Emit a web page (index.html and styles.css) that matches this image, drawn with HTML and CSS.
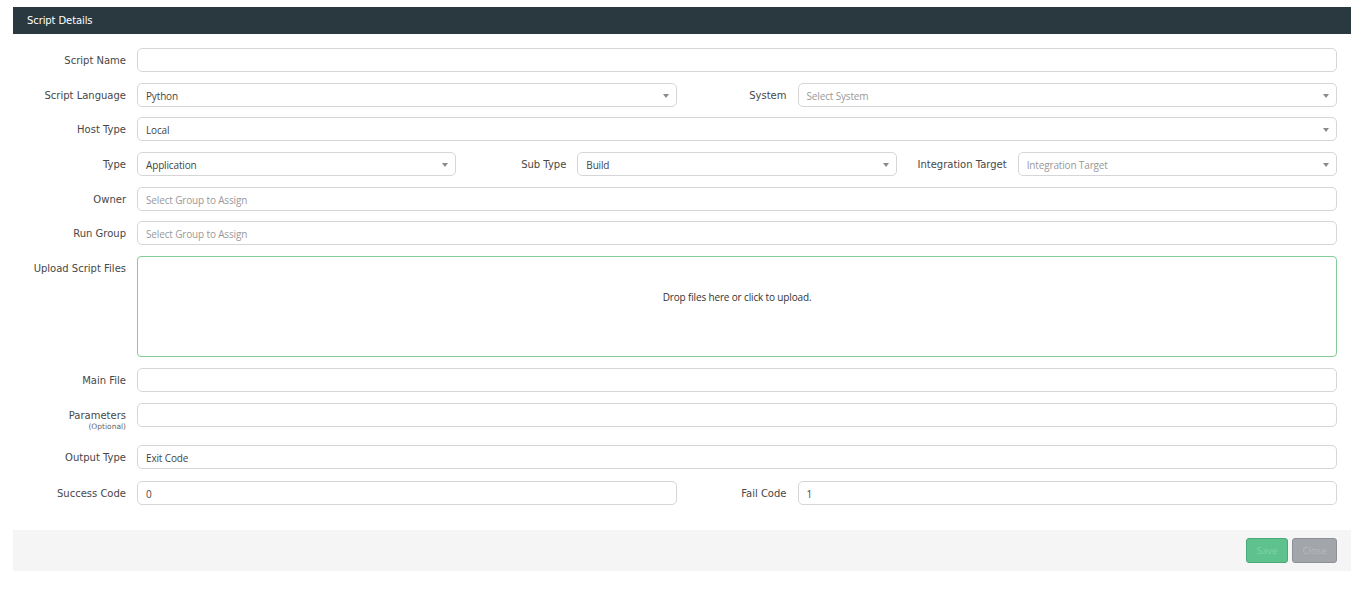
FILE: index.html
```html
<!DOCTYPE html>
<html>
<head>
<meta charset="utf-8">
<link rel="stylesheet" href="styles.css">
</head>
<body>
<div class="panel">
  <div class="panel-head">Script Details</div>
  <div class="form">
    <div class="row">
      <label class="lbl first">Script Name</label>
      <div class="field"></div>
    </div>
    <div class="row">
      <label class="lbl first">Script Language</label>
      <div class="field select">Python</div>
      <label class="lbl">System</label>
      <div class="field select ph">Select System</div>
    </div>
    <div class="row">
      <label class="lbl first">Host Type</label>
      <div class="field select">Local</div>
    </div>
    <div class="row">
      <label class="lbl first">Type</label>
      <div class="field select">Application</div>
      <label class="lbl">Sub Type</label>
      <div class="field select">Build</div>
      <label class="lbl">Integration Target</label>
      <div class="field select ph">Integration Target</div>
    </div>
    <div class="row">
      <label class="lbl first">Owner</label>
      <div class="field ph">Select Group to Assign</div>
    </div>
    <div class="row">
      <label class="lbl first">Run Group</label>
      <div class="field ph">Select Group to Assign</div>
    </div>
    <div class="row">
      <label class="lbl first">Upload Script Files</label>
      <div class="field drop">Drop files here or click to upload.</div>
    </div>
    <div class="row">
      <label class="lbl first">Main File</label>
      <div class="field"></div>
    </div>
    <div class="row params">
      <label class="lbl first two">Parameters<span class="opt">(Optional)</span></label>
      <div class="field"></div>
    </div>
    <div class="row output">
      <label class="lbl first">Output Type</label>
      <div class="field">Exit Code</div>
    </div>
    <div class="row last">
      <label class="lbl first">Success Code</label>
      <div class="field">0</div>
      <label class="lbl">Fail Code</label>
      <div class="field">1</div>
    </div>
  </div>
  <div class="footer">
    <button class="btn save">Save</button>
    <button class="btn close">Close</button>
  </div>
</div>
</body>
</html>
```
FILE: styles.css
```css
html, body {
  margin: 0;
  padding: 0;
  background: #ffffff;
}
body {
  padding: 7px 13px 0 13px;
  font-family: "DejaVu Sans", "Noto Sans", sans-serif;
}
.panel {
  width: 1338px;
}
.panel-head {
  height: 27px;
  background: #2a3840;
  color: #ffffff;
  font-size: 10px;
  line-height: 27px;
  padding-left: 14px;
  letter-spacing: -0.1px;
}
.form {
  padding: 14px 14px 0 0;
}
.row {
  display: flex;
  align-items: flex-start;
  margin-bottom: 10.7px;
}
.row.params {
  margin-bottom: 18.4px;
}
.row.output {
  margin-bottom: 12px;
}
.row.last {
  margin-bottom: 0;
}
.lbl {
  flex: 0 0 110px;
  margin-right: 11px;
  text-align: right;
  font-size: 10px;
  font-weight: 400;
  color: #474747;
  line-height: 24px;
  height: 24px;
  padding-top: 1px;
  box-sizing: border-box;
  white-space: nowrap;
}
.lbl.first {
  flex: 0 0 113px;
}
.lbl.two {
  line-height: 11px;
  padding-top: 7px;
  height: 24px;
  overflow: visible;
}
.opt {
  display: block;
  font-size: 7.5px;
  color: #666;
  line-height: 12px;
}
.field {
  flex: 1 1 0;
  min-width: 0;
  height: 24px;
  box-sizing: border-box;
  border: 1px solid #d6d6d6;
  border-radius: 5px;
  padding: 1px 8px 0 8px;
  font-family: "Open Sans", "Noto Sans", sans-serif;
  font-size: 10px;
  line-height: 22px;
  color: #444;
  position: relative;
  letter-spacing: -0.15px;
}
.field.ph {
  color: #999;
}
.field.select::after {
  content: "";
  position: absolute;
  right: 7px;
  top: 10px;
  border-left: 3px solid transparent;
  border-right: 3px solid transparent;
  border-top: 4px solid #8a8a8a;
}
.field.drop {
  height: 101px;
  padding: 0;
  border: 1.5px solid #84cc98;
  border-radius: 4px;
  text-align: center;
  line-height: 81px;
  color: #333;
}
.footer {
  margin-top: 25px;
  height: 41px;
  background: #f5f5f5;
  display: flex;
  justify-content: flex-end;
  align-items: flex-start;
  padding: 8px 14px 0 0;
  box-sizing: border-box;
  gap: 4px;
}
.btn {
  height: 25px;
  border-radius: 3px;
  font-family: "Open Sans", sans-serif;
  font-size: 9.5px;
  padding: 0;
  cursor: default;
}
.btn.save {
  width: 42px;
  background: #5ec28f;
  border: 1px solid #4aa978;
  color: #7fd4a6;
}
.btn.close {
  width: 45px;
  background: #a2a5a9;
  border: 1px solid #8d9094;
  color: #b8bbbe;
}
```
